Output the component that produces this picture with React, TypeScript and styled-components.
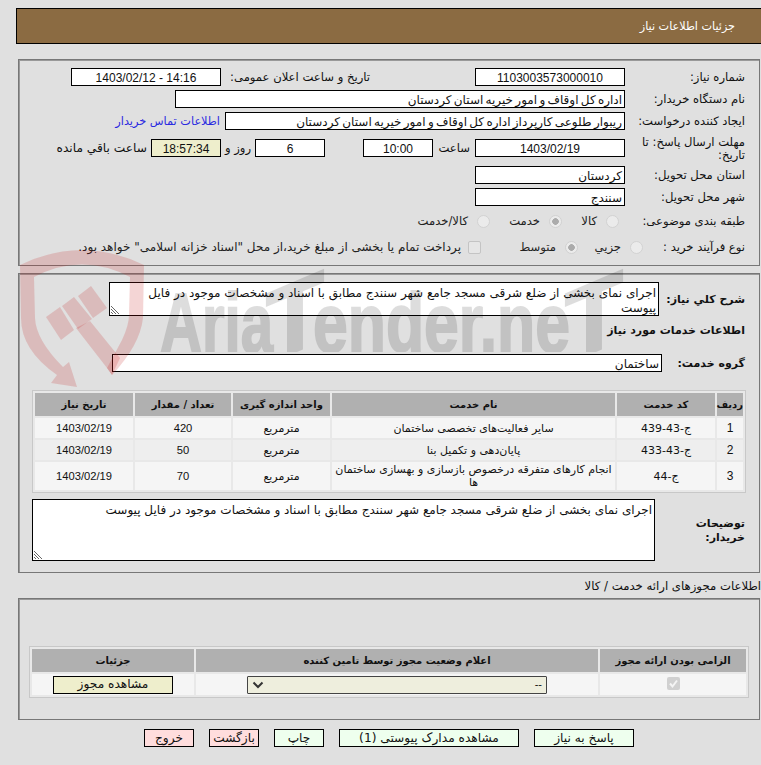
import React from "react";
import styled, { createGlobalStyle } from "styled-components";

const Global = createGlobalStyle`
  html, body { margin: 0; padding: 0; background: #e0e0e0; }
  body { overflow: hidden; }
  #root { width: 761px; height: 765px; overflow: hidden; }
`;

const Page = styled.div`
  position: relative;
  width: 761px;
  height: 765px;
  overflow: hidden;
  box-sizing: border-box;
  padding-top: 8px;
  background: #e0e0e0;
  color: #111;
  font-family: "DejaVu Sans", "Liberation Sans", sans-serif;
  font-size: 11.6px;
  line-height: 13px;
  direction: rtl;
`;

const Header = styled.div`
  box-sizing: border-box;
  width: 747px;
  height: 36px;
  margin: 0 -2px 15px 0;
  border: 1px solid #000;
  background: #8b6b42;
  color: #fff;
  display: flex;
  align-items: center;
  padding: 0 27px 0 0;
  font-size: 11.2px;
`;

const Panel = styled.section<{ $h: number; $top: number }>`
  box-sizing: border-box;
  width: 742px;
  height: ${(p) => p.$h}px;
  margin: ${(p) => p.$top}px 1px 0 18px;
  border: 1px solid #777;
  box-shadow: inset 1px 1px 0 #999;
  padding: 8px 14px 0 0;
`;

const Stack = styled.div`
  display: flex;
  flex-direction: column;
  gap: 4px;
`;

const Row = styled.div<{ $h?: number }>`
  display: flex;
  align-items: center;
  height: ${(p) => p.$h ?? 18}px;
`;

const Label = styled.div<{ $w?: number; $m?: number }>`
  flex: none;
  width: ${(p) => p.$w ?? 120}px;
  margin-right: ${(p) => p.$m ?? 0}px;
  padding-top: 1px;
  white-space: normal;
`;

const BoldLabel = styled(Label)`
  font-weight: 700;
  font-size: 11px;
  line-height: 14px;
`;

const Field = styled.div<{ $w: number; $center?: boolean; $m?: number; $tint?: boolean }>`
  flex: none;
  box-sizing: border-box;
  width: ${(p) => p.$w}px;
  height: 18px;
  margin-right: ${(p) => p.$m ?? 0}px;
  border: 1px solid #000;
  background: ${(p) => (p.$tint ? "#eeeecc" : "#fff")};
  padding: 1px 2px 0;
  font-size: 12px;
  word-spacing: -1.5px;
  line-height: 16px;
  text-align: ${(p) => (p.$center ? "center" : "right")};
  white-space: nowrap;
  overflow: hidden;
`;

const Nums = styled.span<{ $small?: boolean }>`
  font-family: "Liberation Sans", sans-serif;
  font-size: ${(p) => (p.$small ? "11.2px" : "12px")};
  word-spacing: 0;
  direction: ltr;
  unicode-bidi: embed;
`;

const Inline = styled.span<{ $m?: number; $w?: number; $c?: string }>`
  flex: none;
  margin-right: ${(p) => p.$m ?? 0}px;
  width: ${(p) => (p.$w ? `${p.$w}px` : "auto")};
  color: ${(p) => p.$c ?? "inherit"};
  padding-top: 1px;
  white-space: nowrap;
`;

const ContactLink = styled(Inline)`
  font-size: 11.3px;
`;

const LongInline = styled(Inline)`
  font-size: 12.2px;
`;

const Option = styled.label<{ $w: number; $m?: number; $long?: boolean }>`
  flex: none;
  width: ${(p) => p.$w}px;
  margin-right: ${(p) => p.$m ?? 0}px;
  display: flex;
  align-items: center;
  gap: ${(p) => (p.$long ? 7 : 9)}px;
  color: #222;
  font-size: ${(p) => (p.$long ? 12 : 11.6)}px;
  white-space: nowrap;
`;

const Radio = styled.input.attrs({ type: "radio", disabled: true })`
  appearance: none;
  box-sizing: border-box;
  flex: none;
  width: 13px;
  height: 13px;
  margin: 0;
  border-radius: 50%;
  border: 1px solid #d2d2d2;
  background: #ebebeb;
  &:checked {
    background: radial-gradient(circle, #ababab 0 3px, #ebebeb 3.6px);
  }
`;

const Check = styled.input.attrs({ type: "checkbox", disabled: true })`
  appearance: none;
  box-sizing: border-box;
  flex: none;
  width: 13px;
  height: 13px;
  margin: 0;
  border-radius: 2px;
  border: 1px solid #c4c4c4;
  background: #e6e6e6;
`;

const TextArea = styled.div<{ $w: number; $h: number }>`
  position: relative;
  flex: none;
  box-sizing: border-box;
  width: ${(p) => p.$w}px;
  height: ${(p) => p.$h}px;
  border: 1px solid #000;
  background: #fff;
  padding: 3px 2px 0 0;
  font-size: 12px;
  line-height: 14.5px;
  overflow: hidden;
`;

const Grip = styled.svg`
  position: absolute;
  left: 1px;
  bottom: 1px;
  width: 9px;
  height: 9px;
`;

const Table = styled.table<{ $w: number; $m: number }>`
  box-sizing: border-box;
  width: ${(p) => p.$w}px;
  margin-right: ${(p) => p.$m}px;
  table-layout: fixed;
  border-collapse: separate;
  border-spacing: 2px;
  border: 1px solid #c8c8c8;
  background: #e8e8e8;
`;

const Th = styled.th<{ $w?: number }>`
  width: ${(p) => (p.$w ? `${p.$w}px` : "auto")};
  height: 23px;
  padding: 0;
  background: #b0b0b0;
  color: #111;
  font-weight: 700;
  text-align: center;
  font-size: 10px;
  white-space: nowrap;
`;

const Td = styled.td<{ $alt?: boolean; $h?: number }>`
  height: ${(p) => p.$h ?? 20}px;
  padding: 0 2px;
  background: ${(p) => (p.$alt ? "#eeeeee" : "#f5f5f5")};
  text-align: center;
  font-size: 11px;
  line-height: 13px;
`;

const Spacer = styled.div<{ $h: number }>`
  height: ${(p) => p.$h}px;
`;

const Caption = styled.div`
  margin: 5px 0 0 0;
  height: 17px;
  line-height: 17px;
  font-size: 11.7px;
`;

const Actions = styled.div`
  display: flex;
  gap: 15px;
  margin: 9px 127px 0 0;
`;

const Btn = styled.button<{ $w: number; $red?: boolean; $tint?: boolean }>`
  box-sizing: border-box;
  width: ${(p) => p.$w}px;
  height: 18px;
  padding: 0;
  border: 1px solid #000;
  background: ${(p) => (p.$red ? "#ffdddd" : p.$tint ? "#eeeecc" : "#eeffee")};
  color: #111;
  font: inherit;
  font-size: 12.2px;
  line-height: 15px;
  white-space: nowrap;
`;

const Select = styled.div`
  box-sizing: border-box;
  width: 300px;
  height: 18px;
  margin: 0 auto;
  border: 1px solid #444;
  border-radius: 1px;
  background: #eeeedd;
  display: flex;
  align-items: center;
  justify-content: space-between;
  padding: 0 4px 0 4px;
  font-family: "Liberation Sans", sans-serif;
`;

const Watermark = styled.svg`
  position: absolute;
  left: 0;
  top: 0;
  pointer-events: none;
`;

const Mark = styled.text`
  font-family: "Liberation Sans", sans-serif;
  font-weight: 700;
  font-size: 84px;
  fill: #000;
  stroke: #000;
  stroke-width: 2px;
  direction: ltr;
`;

const WatermarkArt = () => (
  <Watermark width="761" height="400" viewBox="0 0 761 400">
    <g fill="#c01818" fillOpacity="0.18">
      <path d="M20 265 Q82 235 144 265 L143 318 Q140 345 112 375 L107 368 L122 340 Q129 325 129 315 L130 277 Q82 252 34 277 L35 318 Q36 340 63 367 L69 362 L77 387 L51 383 L57 375 Q21 350 21 318 Z" />
      <path d="M46 317 L60 307 L74 330 L61 340 Z" />
      <path d="M62 306 L74 297 L92 319 L78 329 Z" />
      <path d="M78 296 L91 286 L107 308 L93 318 Z" />
      <path d="M76 328 L90 321 L120 358 L112 375 L107 368 Z" />
    </g>
    <clipPath id="wm">
      <rect x="150" y="260" width="480" height="92" />
    </clipPath>
    <g clipPath="url(#wm)" opacity="0.13">
      <Mark x="160" y="352" textLength="113" lengthAdjust="spacingAndGlyphs">Aria</Mark>
      <Mark x="0" y="0" textLength="58" lengthAdjust="spacingAndGlyphs" transform="translate(266 364) skewY(-23) scale(1 1.2)">T</Mark>
      <Mark x="313" y="352" textLength="257" lengthAdjust="spacingAndGlyphs">ender.ne</Mark>
      <Mark x="0" y="0" textLength="58" lengthAdjust="spacingAndGlyphs" transform="translate(565 364) skewY(-23) scale(1 1.2)">T</Mark>
    </g>
  </Watermark>
);

const ResizeGrip = () => (
  <Grip viewBox="0 0 9 9">
    <path d="M0 1 L8 9 M0 4 L5 9 M0 7 L2 9" stroke="#666" strokeWidth="1" fill="none" />
  </Grip>
);

const items = [
  { n: "1", code: "ج-43-439", name: "سایر فعالیت‌های تخصصی ساختمان", unit: "مترمربع", qty: "420" },
  { n: "2", code: "ج-43-433", name: "پایان‌دهی و تکمیل بنا", unit: "مترمربع", qty: "50" },
  { n: "3", code: "ج-44", name: "انجام کارهای متفرقه درخصوص بازسازی و بهسازی ساختمان ها", unit: "مترمربع", qty: "70" },
];

const desc = "اجرای نمای بخشی از ضلع شرقی مسجد جامع شهر سنندج مطابق با اسناد و مشخصات موجود در فایل پیوست";

export default function App() {
  return (
    <Page>
      <Global />
      <Header>جزئیات اطلاعات نیاز</Header>

      <Panel $h={207} $top={0}>
        <Stack>
          <Row>
            <Label>شماره نیاز:</Label>
            <Field $w={150} $center><Nums>1103003573000010</Nums></Field>
            <Label $w={149} $m={105}>تاریخ و ساعت اعلان عمومی:</Label>
            <Field $w={150} $center><Nums>1403/02/12 - 14:16</Nums></Field>
          </Row>
          <Row>
            <Label>نام دستگاه خریدار:</Label>
            <Field $w={450}>اداره کل اوقاف و امور خیریه استان کردستان</Field>
          </Row>
          <Row>
            <Label>ایجاد کننده درخواست:</Label>
            <Field $w={400}>ریبوار طلوعی کارپرداز اداره کل اوقاف و امور خیریه استان کردستان</Field>
            <ContactLink $m={5} $c="#2a2ae0">اطلاعات تماس خریدار</ContactLink>
          </Row>
          <Row $h={28}>
            <Label>مهلت ارسال پاسخ: تا تاریخ:</Label>
            <Field $w={150} $center><Nums>1403/02/19</Nums></Field>
            <Inline $m={5} $w={37}>ساعت</Inline>
            <Field $w={70} $center><Nums>10:00</Nums></Field>
            <Field $w={70} $m={38} $center><Nums>6</Nums></Field>
            <Inline $m={4} $w={30}>روز و</Inline>
            <Field $w={70} $tint $center><Nums>18:57:34</Nums></Field>
            <LongInline $m={4}>ساعت باقي مانده</LongInline>
          </Row>
          <Row>
            <Label>استان محل تحویل:</Label>
            <Field $w={150}>کردستان</Field>
          </Row>
          <Row>
            <Label>شهر محل تحویل:</Label>
            <Field $w={150}>سنندج</Field>
          </Row>
          <Row $h={22}>
            <Label>طبقه بندی موضوعی:</Label>
            <Option $w={57} $m={6}><Radio />کالا</Option>
            <Option $w={72}><Radio defaultChecked />خدمت</Option>
            <Option $w={80}><Radio />کالا/خدمت</Option>
          </Row>
          <Row $h={22}>
            <Label $w={102}>نوع فرآیند خرید :</Label>
            <Option $w={65}><Radio />جزیي</Option>
            <Option $w={97}><Radio defaultChecked />متوسط</Option>
            <Option $w={410} $long><Check />پرداخت تمام یا بخشی از مبلغ خرید،از محل "اسناد خزانه اسلامی" خواهد بود.</Option>
          </Row>
        </Stack>
      </Panel>

      <Panel $h={300} $top={7}>
        <Row $h={34}>
          <BoldLabel $w={86}>شرح کلي نیاز:</BoldLabel>
          <TextArea $w={550} $h={34}>{desc}<ResizeGrip /></TextArea>
        </Row>
        <Row $h={28}>
          <BoldLabel $w={300}>اطلاعات خدمات مورد نیاز</BoldLabel>
        </Row>
        <Spacer $h={10} />
        <Row>
          <BoldLabel $w={83}>گروه خدمت:</BoldLabel>
          <Field $w={550}>ساختمان</Field>
        </Row>
        <Spacer $h={18} />
        <Table $w={714} $m={-1}>
          <thead>
            <tr>
              <Th $w={26}>ردیف</Th>
              <Th $w={98}>کد خدمت</Th>
              <Th $w={283}>نام خدمت</Th>
              <Th $w={97}>واحد اندازه گیری</Th>
              <Th $w={96}>تعداد / مقدار</Th>
              <Th>تاریخ نیاز</Th>
            </tr>
          </thead>
          <tbody>
            {items.map((it, i) => (
              <tr key={it.n}>
                <Td $alt={i === 1} $h={i === 2 ? 28 : 20}><Nums>{it.n}</Nums></Td>
                <Td $alt={i === 1}>{it.code}</Td>
                <Td $alt={i === 1}>{it.name}</Td>
                <Td $alt={i === 1}>{it.unit}</Td>
                <Td $alt={i === 1}><Nums $small>{it.qty}</Nums></Td>
                <Td $alt={i === 1}><Nums $small>1403/02/19</Nums></Td>
              </tr>
            ))}
          </tbody>
        </Table>
        <Spacer $h={6} />
        <Row $h={62}>
          <BoldLabel $w={90}>توضیحات خریدار:</BoldLabel>
          <TextArea $w={623} $h={62}>{desc}<ResizeGrip /></TextArea>
        </Row>
      </Panel>

      <Caption>اطلاعات مجوزهای ارائه خدمت / کالا</Caption>

      <Panel $h={122} $top={3}>
        <Spacer $h={39} />
        <Table $w={720} $m={-4}>
          <thead>
            <tr>
              <Th $w={146}>الزامی بودن ارائه مجوز</Th>
              <Th $w={402}>اعلام وضعیت مجوز توسط تامین کننده</Th>
              <Th>جزئیات</Th>
            </tr>
          </thead>
          <tbody>
            <tr>
              <Td $h={21}>
                <svg width="13" height="13" viewBox="0 0 13 13">
                  <rect width="13" height="13" rx="2" fill="#d0d0d0" />
                  <path d="M3 6.5 L5.5 9.5 L10 3.5" stroke="#f4f4f4" strokeWidth="2" fill="none" />
                </svg>
              </Td>
              <Td>
                <Select>
                  <span>--</span>
                  <svg width="12" height="8" viewBox="0 0 12 8">
                    <path d="M1.5 1.5 L6 6 L10.5 1.5" stroke="#333" strokeWidth="2" fill="none" />
                  </svg>
                </Select>
              </Td>
              <Td><Btn $w={120} $tint>مشاهده مجوز</Btn></Td>
            </tr>
          </tbody>
        </Table>
      </Panel>

      <Actions>
        <Btn $w={100}>پاسخ به نیاز</Btn>
        <Btn $w={180}>مشاهده مدارک پیوستی (1)</Btn>
        <Btn $w={50}>چاپ</Btn>
        <Btn $w={50} $red>بازگشت</Btn>
        <Btn $w={50} $red>خروج</Btn>
      </Actions>

      <WatermarkArt />
    </Page>
  );
}
